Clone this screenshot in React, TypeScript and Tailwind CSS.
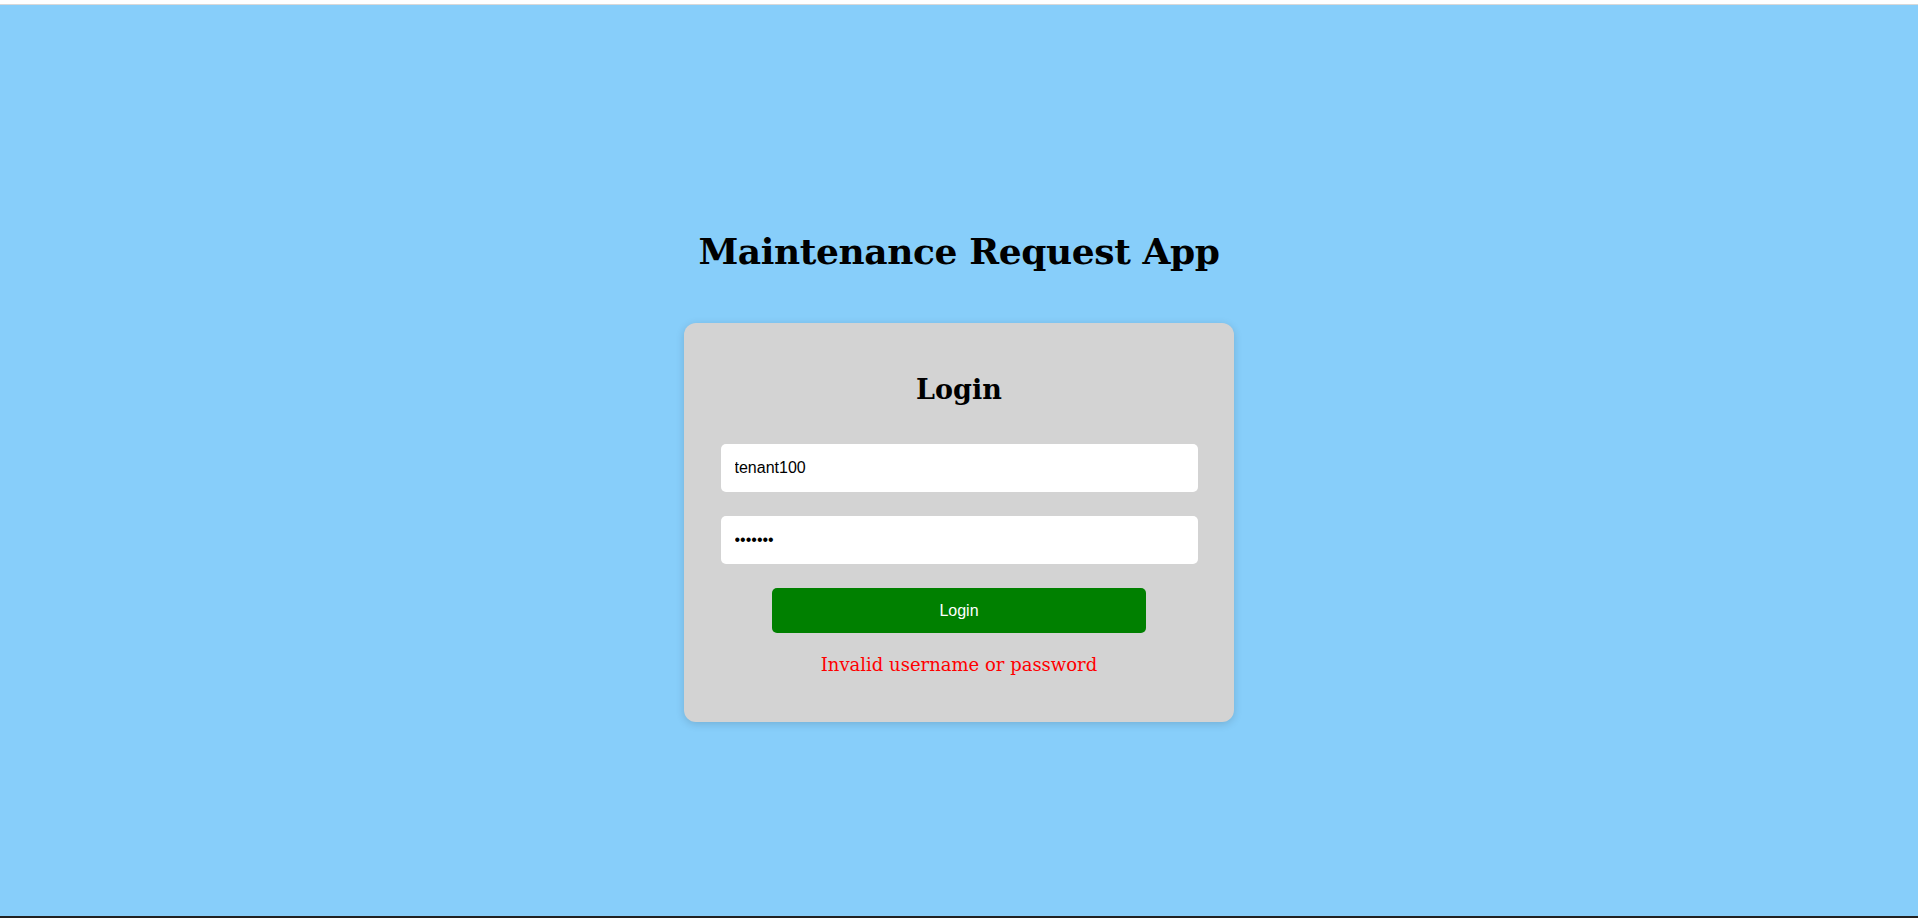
export default function App() {
  return (
    <div className="flex h-[918px] w-full flex-col overflow-hidden">
      <div className="h-[5px] shrink-0 bg-white border-b border-[#d8d8d8]" />
      <main className="flex flex-1 flex-col items-center bg-[#87cefa] pt-[222px]">
        <h1 className="h-[48px] font-['DejaVu_Serif',serif] text-[36px] font-bold leading-[48px] tracking-[-0.4px] text-black">
          Maintenance Request App
        </h1>
        <div className="mt-12 flex w-[550px] flex-col items-center rounded-[12px] bg-[#d3d3d3] pt-[50px] pb-[46px] shadow-[0_2px_8px_rgba(0,0,0,0.15)]">
          <h2 className="h-[34px] font-['DejaVu_Serif',serif] text-[27px] font-bold leading-[34px] text-black">
            Login
          </h2>
          <input
            type="text"
            defaultValue="tenant100"
            className="mt-[37px] h-[48px] w-[477px] rounded-[5px] bg-white px-[14px] font-['Liberation_Sans',Arial,sans-serif] text-[16px] text-black outline-none"
          />
          <input
            type="password"
            defaultValue="1234567"
            className="mt-[24px] h-[48px] w-[477px] rounded-[5px] bg-white px-[14px] font-['Liberation_Sans',Arial,sans-serif] text-[16px] text-black outline-none"
          />
          <button className="mt-[24px] h-[45px] w-[374px] rounded-[5px] bg-[#008000] font-['Liberation_Sans',Arial,sans-serif] text-[16px] text-white">
            Login
          </button>
          <p className="mt-[21px] h-[22px] font-['DejaVu_Serif',serif] text-[18px] leading-[22px] text-[#ff0000]">
            Invalid username or password
          </p>
        </div>
      </main>
      <div className="h-[2px] shrink-0 bg-[#222]" />
    </div>
  );
}
